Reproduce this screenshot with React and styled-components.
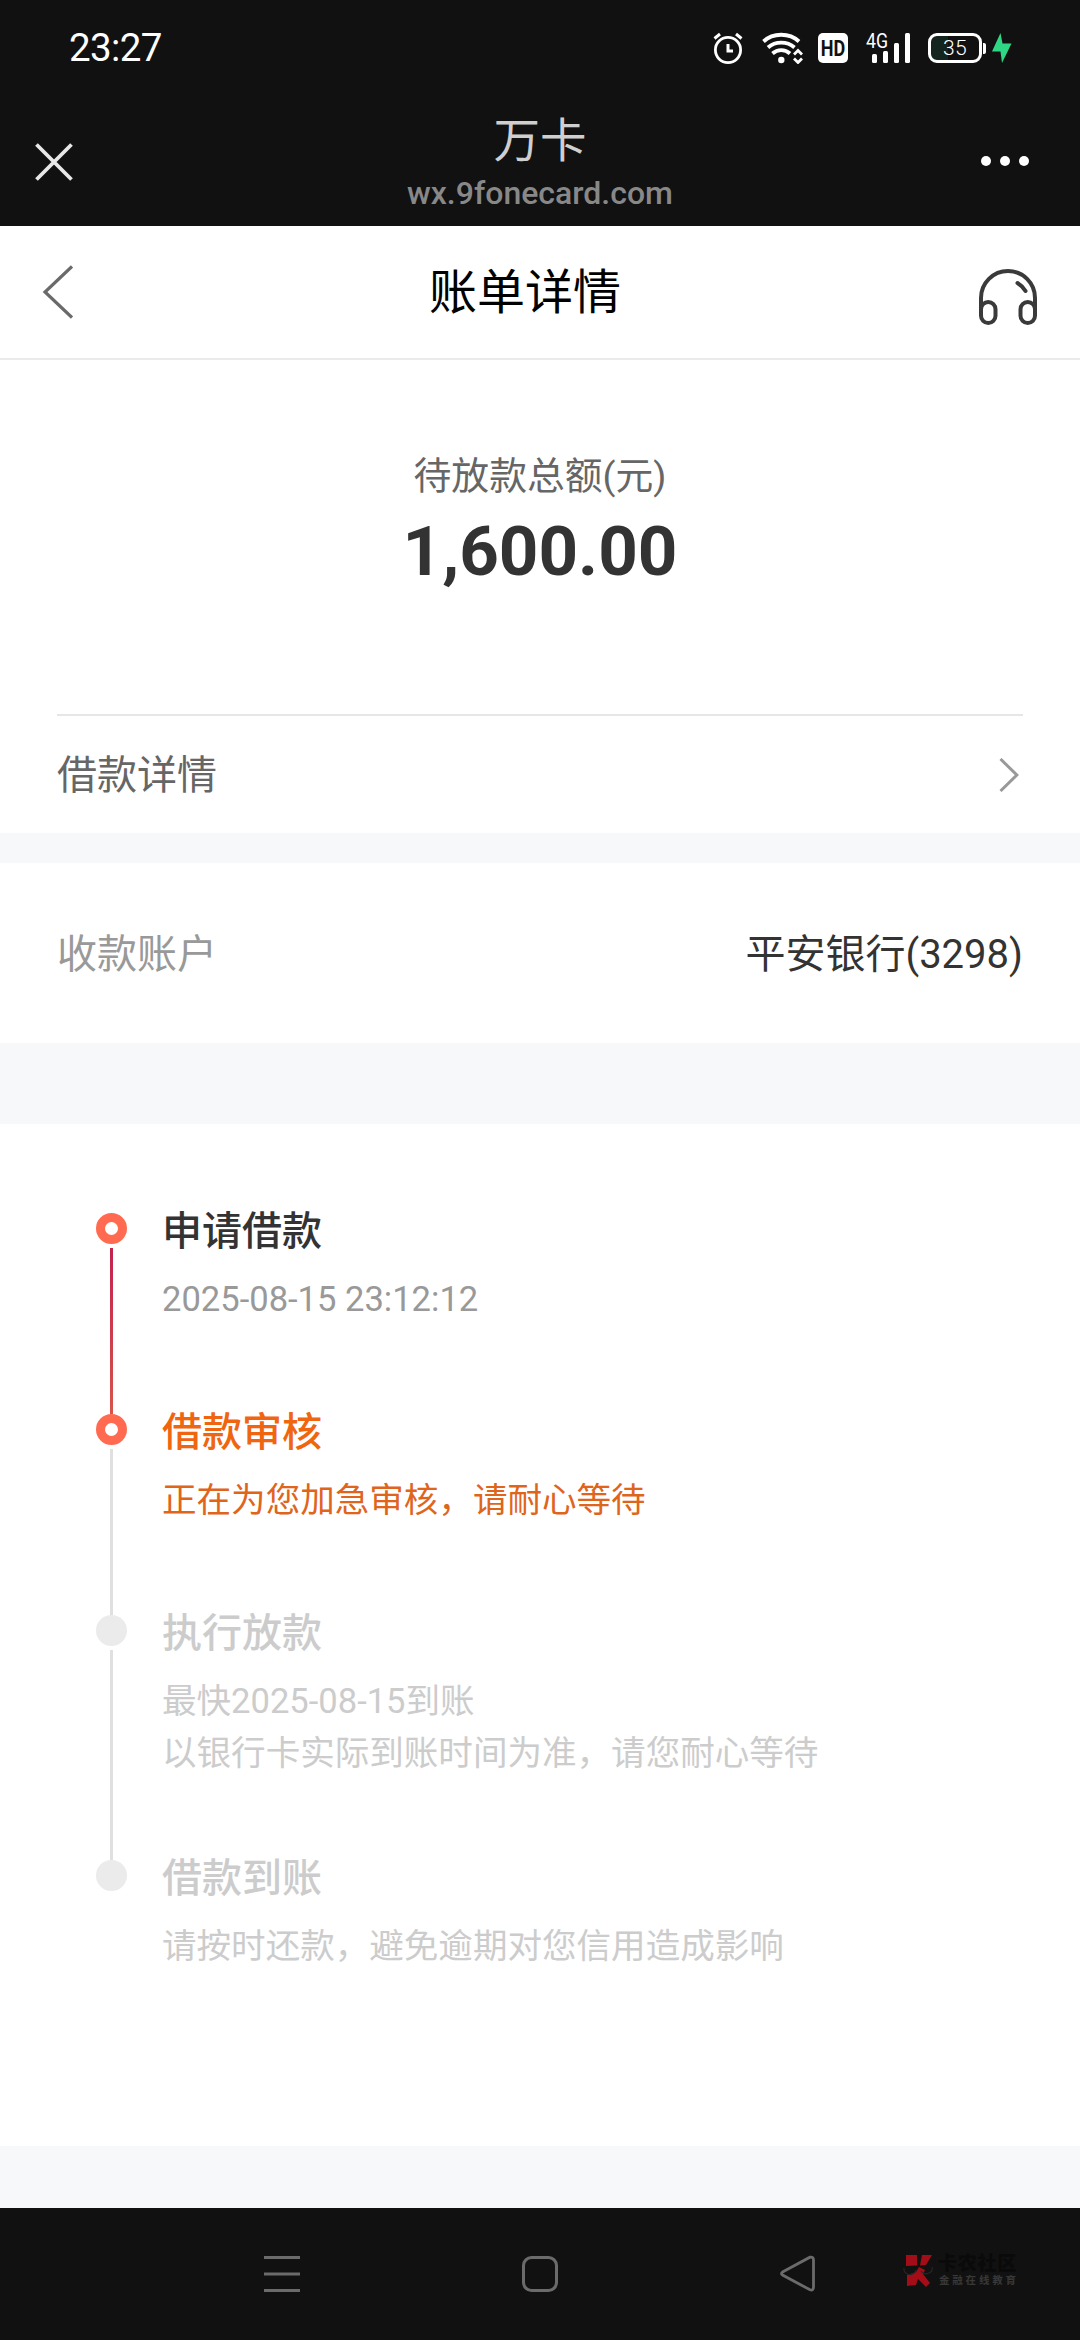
import React from 'react'
import styled, { createGlobalStyle } from 'styled-components'


const GlobalStyle = createGlobalStyle`
  * {
    box-sizing: border-box;
  }

  body {
    margin: 0;
    background: #f7f8fa;
    font-family: Roboto, 'Noto Sans CJK SC', sans-serif;
  }

  svg {
    display: block;
    flex: none;
  }
`

const Page = styled.div`
  width: 1080px;
  height: 2340px;
  display: flex;
  flex-direction: column;
  overflow: hidden;
`

/* top of the phone */

const StatusBar = styled.div`
  height: 96px;
  flex: none;
  display: flex;
  align-items: center;
  justify-content: space-between;
  padding: 0 68px 0 69px;
  background: #111;
  color: #fff;
`

const Clock = styled.span`
  font-size: 38.5px;
  line-height: 46px;
  letter-spacing: -0.6px;
`

const StatusIcons = styled.div`
  display: flex;
  align-items: center;
`

const HdBadge = styled.span`
  width: 30px;
  height: 30px;
  margin: 0 18px 0 15px;
  border-radius: 5px;
  background: #fff;
  color: #111;
  font-size: 22px;
  font-weight: 700;
  line-height: 31px;
  display: flex;
  justify-content: center;

  span {
    transform: scaleX(0.82);
  }
`

const Battery = styled.div`
  width: 54px;
  height: 30px;
  margin-left: 18px;
  border: 3px solid #fff;
  border-radius: 9px;
  background: linear-gradient(90deg, #14241e 35%, #111 35%);
  font-size: 21px;
  font-weight: 300;
  line-height: 25px;
  letter-spacing: 0.3px;
  text-align: center;
`

const BatteryTip = styled.span`
  width: 3px;
  height: 11px;
  margin: 0 6px 0 1px;
  border-radius: 0 2px 2px 0;
  background: #fff;
`

const BrowserBar = styled.header`
  height: 130px;
  flex: none;
  display: grid;
  grid-template-columns: 140px 1fr 140px;
  background: #111;
`

const BarSide = styled.div`
  display: flex;
  justify-content: ${({ $end }) => ($end ? 'flex-end' : 'flex-start')};
  padding: ${({ $pad }) => $pad};
`

const BarTitle = styled.div`
  display: flex;
  flex-direction: column;
  align-items: center;
  padding-top: 12px;

  strong {
    font-size: 46.5px;
    font-weight: 400;
    line-height: 66px;
    color: #cfcfcf;
  }

  span {
    font-size: 32px;
    font-weight: 500;
    line-height: 38px;
    color: #888;
  }
`

const NavBar = styled.nav`
  height: 134px;
  flex: none;
  display: grid;
  grid-template-columns: 110px 1fr 140px;
  background: #fff;
  border-bottom: 2px solid #ebebeb;
`

const NavTitle = styled.h1`
  margin: 0;
  font-size: 48px;
  font-weight: 400;
  line-height: 134px;
  text-align: center;
  color: #000;
`

/* bill */

const Card = styled.section`
  flex: none;
  height: ${({ $height }) => $height}px;
  margin-bottom: ${({ $gap }) => $gap || 0}px;
  padding: 0 57px;
  background: #fff;
`

const Summary = styled.div`
  height: 356px;
  padding-top: 88px;
  text-align: center;
  border-bottom: 2px solid #e6e6e6;
`

const SummaryLabel = styled.div`
  font-size: 37.8px;
  line-height: 56px;
  color: #666;
`

const Amount = styled.div`
  margin-top: 6px;
  font-size: 69.12px;
  font-weight: 700;
  line-height: 84px;
  color: #333;
`

const Row = styled.div`
  height: ${({ $height }) => $height}px;
  padding-top: 3px;
  display: flex;
  align-items: center;
  justify-content: space-between;
  font-size: 40px;
  line-height: 60px;

  svg {
    margin-top: -3px;
  }
`

const Label = styled.span`
  color: ${({ $light }) => ($light ? '#999' : '#666')};
`

const Value = styled.span`
  color: #333;
`

/* progress */

const Timeline = styled.ol`
  margin: 0;
  padding: 76px 0 0 39px;
  list-style: none;
`

const StepItem = styled.li`
  display: flex;
  height: ${({ $height }) => $height}px;
`

const StepBody = styled.div`
  padding-top: 2px;
`

const Track = styled.div`
  width: 31px;
  flex: none;
  margin-right: 35px;
  padding-top: 13px;
  display: flex;
  flex-direction: column;
  align-items: center;
`

const Dot = styled.span`
  width: 31px;
  height: 31px;
  flex: none;
  border-radius: 50%;
  border: ${({ $on }) => ($on ? '9px solid #ff6a50' : 'none')};
  background: ${({ $on }) => ($on ? '#fff' : '#ebebeb')};
`

const Line = styled.span`
  width: 3px;
  flex: 1;
  margin: 4px 0 -13px;
  background: ${({ $on }) => ($on ? 'linear-gradient(#c2224f, #d9534a)' : '#e0e0e0')};
`

const tones = {
  done: ['#333', '#999'],
  active: ['#f0650f', '#e0651c'],
  todo: ['#ccc', '#ccc'],
}

const StepTitle = styled.div`
  font-size: 40px;
  font-weight: 500;
  line-height: 60px;
  color: ${({ $tone }) => tones[$tone][0]};
`

const StepText = styled.div`
  margin-top: 12px;
  font-size: 34.56px;
  line-height: 51.84px;
  color: ${({ $tone }) => tones[$tone][1]};
  white-space: pre-line;
`

/* bottom of the phone */

const SystemBar = styled.footer`
  height: 132px;
  flex: none;
  margin-top: auto;
  display: flex;
  align-items: flex-start;
  padding: 46px 0 0 262px;
  background: #111;
`

const NavKey = styled.span`
  margin-right: ${({ $gap }) => $gap}px;
`

const Watermark = styled.div`
  display: flex;
  gap: 5px;
`

const WatermarkText = styled.div`
  display: flex;
  flex-direction: column;

  b {
    font-size: 19px;
    font-weight: 900;
    line-height: 20px;
    letter-spacing: 0.8px;
    color: #0a0a0a;
  }

  small {
    padding-left: 1px;
    font-size: 10.5px;
    font-weight: 700;
    line-height: 14px;
    letter-spacing: 2.8px;
    color: #383838;
  }
`

const AlarmIcon = () => (
  <svg width="32" height="32" viewBox="0 0 32 32" fill="none" stroke="#fff">
    <circle cx="16" cy="18" r="12.6" strokeWidth="2.8" />
    <path d="M16 12v7h5" strokeWidth="3" />
    <path d="M2.500 6.500L8 2M24 2l5.500 4.500" strokeWidth="3" />
  </svg>
)

const WifiIcon = () => (
  <svg width="41" height="32" viewBox="0 0 41 32" fill="none" stroke="#fff">
    <path d="M1.500 9.500C11 .5 27.500 .5 37 9.500" strokeWidth="3.800" />
    <path d="M6 15.500c7.500-6.500 19-6.500 26.500 0" strokeWidth="3.800" />
    <path d="M10.500 21.500c5-4.500 12.500-4.500 17.500 0" strokeWidth="3.800" />
    <circle cx="19.300" cy="28" r="3.200" fill="#fff" stroke="none" />
    <path d="M32 22.500l4-4 4 4M32 26.500l4 4 4-4" strokeWidth="2.800" />
  </svg>
)

const SignalIcon = () => (
  <svg width="44" height="44" viewBox="0 -6 44 44" fill="#fff">
    <text x="0" y="15.500" fontSize="19.500" fontFamily="Roboto" fontWeight="400" textLength="22" lengthAdjust="spacingAndGlyphs">4G</text>
    <rect x="6" y="22" width="5" height="9" rx="1.500" />
    <rect x="17" y="19" width="5" height="12" rx="1.500" />
    <rect x="28" y="11" width="5" height="20" rx="1.500" />
    <rect x="39" y="1" width="5" height="30" rx="1.500" />
  </svg>
)

const BoltIcon = () => (
  <svg width="20" height="32" viewBox="0 0 20 32">
    <path d="M8.500 1L0 19.500h8.500L10 31l9.500-19.500H10.500z" fill="#2fd784" />
  </svg>
)

const CloseIcon = () => (
  <svg width="38" height="38" viewBox="0 0 38 38" stroke="#e8e8e8" strokeWidth="3.800">
    <path d="M1.500 1.500l35 35M36.500 1.500l-35 35" />
  </svg>
)

const MoreIcon = () => (
  <svg width="50" height="12" viewBox="0 0 50 12" fill="#fff">
    <circle cx="6" cy="6" r="5" />
    <circle cx="25" cy="6" r="5" />
    <circle cx="44" cy="6" r="5" />
  </svg>
)

const BackIcon = () => (
  <svg width="32" height="54" viewBox="0 0 32 54" fill="none" stroke="#6a6a6a" strokeWidth="3.200">
    <path d="M31 1.500L4 27 31 52.500" />
  </svg>
)

const HeadsetIcon = () => (
  <svg width="58" height="56" viewBox="0 0 58 56" fill="none" stroke="#3a3a3a" strokeWidth="4" strokeLinecap="round">
    <path d="M2 45V29a27 27 0 0 1 54 0v16" />
    <rect x="2" y="33" width="14.500" height="21" rx="7.200" />
    <rect x="41.500" y="33" width="14.500" height="21" rx="7.200" />
    <path d="M38.500 14q5 3 8 8" />
  </svg>
)

const ArrowIcon = () => (
  <svg width="24" height="34" viewBox="0 0 24 34" fill="none" stroke="#999" strokeWidth="3">
    <path d="M1.500 1l16.300 16L1.500 33" />
  </svg>
)

const LogoK = () => (
  <svg width="30" height="34" viewBox="0 0 30 34">
    <path d="M3 1h11v10.500L3 12zM19 1h10l-6 10-6 .5zM4 21l9-3 3-5 6 3-2 4 7 9-4 4-8-8-2 6-9 1z" fill="#a30d17" />
    <g fill="none" stroke="#262626" strokeWidth="1.200">
      <path d="M1 14a6 5.500 0 0 0 12 2M18 17a6 5.500 0 0 0 11-4" />
    </g>
  </svg>
)

const steps = [
  { title: '申请借款', text: '2025-08-15 23:12:12', tone: 'done', height: 201, dot: true, line: true },
  { title: '借款审核', text: '正在为您加急审核，请耐心等待', tone: 'active', height: 201, dot: true },
  { title: '执行放款', text: '最快2025-08-15到账\n以银行卡实际到账时间为准，请您耐心等待', tone: 'todo', height: 245 },
  { title: '借款到账', text: '请按时还款，避免逾期对您信用造成影响', tone: 'todo', height: 126 },
]

const App = () => {
  return (
    <Page lang="zh-CN">
      <GlobalStyle />

      <StatusBar>
        <Clock>23:27</Clock>
        <StatusIcons>
          <AlarmIcon />
          <NavKey $gap={18} />
          <WifiIcon />
          <HdBadge><span>HD</span></HdBadge>
          <SignalIcon />
          <Battery>35</Battery>
          <BatteryTip />
          <BoltIcon />
        </StatusIcons>
      </StatusBar>

      <BrowserBar>
        <BarSide $pad="47px 0 0 35px">
          <CloseIcon />
        </BarSide>
        <BarTitle>
          <strong>万卡</strong>
          <span>wx.9fonecard.com</span>
        </BarTitle>
        <BarSide $end $pad="59px 50px 0 0">
          <MoreIcon />
        </BarSide>
      </BrowserBar>

      <NavBar>
        <BarSide $pad="39px 0 0 41px">
          <BackIcon />
        </BarSide>
        <NavTitle>账单详情</NavTitle>
        <BarSide $end $pad="43px 43px 0 0">
          <HeadsetIcon />
        </BarSide>
      </NavBar>

      <Card $height={473} $gap={30}>
        <Summary>
          <SummaryLabel>待放款总额(元)</SummaryLabel>
          <Amount>1,600.00</Amount>
        </Summary>
        <Row $height={117}>
          <Label>借款详情</Label>
          <ArrowIcon />
        </Row>
      </Card>

      <Card $height={180} $gap={81}>
        <Row $height={180}>
          <Label $light>收款账户</Label>
          <Value>平安银行(3298)</Value>
        </Row>
      </Card>

      <Card $height={1022}>
        <Timeline>
          {steps.map((step, i) => (
            <StepItem key={step.title} $height={step.height}>
              <Track>
                <Dot $on={step.dot} />
                {i < steps.length - 1 && <Line $on={step.line} />}
              </Track>
              <StepBody>
                <StepTitle $tone={step.tone}>{step.title}</StepTitle>
                <StepText $tone={step.tone}>{step.text}</StepText>
              </StepBody>
            </StepItem>
          ))}
        </Timeline>
      </Card>

      <SystemBar>
        <NavKey $gap={218}>
          <svg width="40" height="40" viewBox="0 0 40 40" stroke="#6b6b6b" strokeWidth="3">
            <path d="M2 3.500h36M2 20h36M2 36.500h36" />
          </svg>
        </NavKey>
        <NavKey $gap={218}>
          <svg width="40" height="40" viewBox="0 0 40 40" fill="none" stroke="#6b6b6b" strokeWidth="3">
            <rect x="3.500" y="3.500" width="33" height="33" rx="8" />
          </svg>
        </NavKey>
        <NavKey $gap={85}>
          <svg width="40" height="40" viewBox="0 0 40 40" fill="none" stroke="#6b6b6b" strokeWidth="2.800">
            <path d="M4.500 18L32 3.200Q35.500 2.500 35.500 6V33Q35.500 37 32 35.800L4.500 21Q2.500 19.500 4.500 18z" />
          </svg>
        </NavKey>
        <Watermark>
          <LogoK />
          <WatermarkText>
            <b>卡农社区</b>
            <small>金融在线教育</small>
          </WatermarkText>
        </Watermark>
      </SystemBar>
    </Page>
  )
}

export default App
